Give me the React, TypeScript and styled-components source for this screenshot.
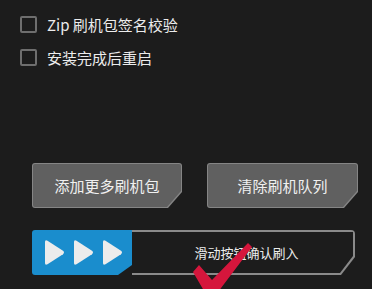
import React from "react";
import styled, { createGlobalStyle } from "styled-components";

const Global = createGlobalStyle`
  html, body { margin: 0; padding: 0; background: #1c1c1c; }
  body { width: 372px; height: 289px; overflow: hidden; font-family: "Noto Sans CJK SC", "Noto Sans", sans-serif; }
`;

const Page = styled.div`
  position: relative;
  width: 372px;
  height: 289px;
  background: #1c1c1c;
  display: flex;
  flex-direction: column;
  padding: 8px 0 0 20px;
  box-sizing: border-box;
  overflow: hidden;
`;

const OptionRow = styled.label`
  display: flex;
  align-items: center;
  gap: 10px;
  height: 33px;
  color: #ececec;
  font-size: 15px;
`;

const Box = styled.span`
  width: 17px;
  height: 17px;
  box-sizing: border-box;
  border: 2px solid #6e6e6e;
  border-radius: 2px;
`;

const Buttons = styled.div`
  display: flex;
  gap: 25px;
  margin: 89px 0 0 12px;
`;

const cut = (x: number, y: number) =>
  `polygon(0 0, 100% 0, 100% calc(100% - ${y}px), calc(100% - ${x}px) 100%, 0 100%)`;

const ButtonFrame = styled.div<{ $w: number }>`
  width: ${(p) => p.$w}px;
  height: 45px;
  padding: 1px;
  box-sizing: border-box;
  background: #858585;
  border-radius: 3px;
  clip-path: ${cut(14, 16)};
  display: flex;
`;

const ButtonFace = styled.div`
  flex: 1;
  background: #606060;
  border-radius: 2px;
  clip-path: ${cut(14, 16)};
  display: flex;
  align-items: center;
  justify-content: center;
  color: #f0f0f0;
  font-size: 15px;
  padding-bottom: 1px;
`;

const Slider = styled.div`
  display: flex;
  width: 323px;
  height: 45px;
  margin: 22px 0 0 12px;
`;

const Knob = styled.div`
  width: 100px;
  background: #1a8dcd;
  border-radius: 3px 0 0 3px;
  clip-path: ${cut(14, 10)};
  display: flex;
  align-items: center;
  gap: 7px;
  padding-left: 11px;
  box-sizing: border-box;
`;

const Arrow = styled.svg`
  width: 22px;
  height: 27px;
`;

const TrackFrame = styled.div`
  flex: 1;
  display: flex;
  padding: 2px 2px 2px 0;
  background: #8a8a8a;
  border-radius: 0 4px 0 0;
  clip-path: ${cut(14, 18)};
`;

const TrackFace = styled.div`
  flex: 1;
  background: #1c1c1c;
  clip-path: ${cut(13, 17)};
  display: flex;
  align-items: center;
  justify-content: center;
  padding-left: 8px;
  color: #ececec;
  font-size: 13px;
`;

const Check = styled.svg`
  position: absolute;
  left: 188px;
  top: 238px;
  width: 70px;
  height: 60px;
`;

const ArrowIcon = () => (
  <Arrow viewBox="0 0 22 27">
    <path d="M2 3 Q2 0.5 4.5 1.8 L20 11.8 Q22 13.5 20 15.2 L4.5 25.2 Q2 26.5 2 24 Z" fill="#ececec" />
  </Arrow>
);

export default function App() {
  return (
    <>
      <Global />
      <Page>
        <OptionRow>
          <Box />
          Zip 刷机包签名校验
        </OptionRow>
        <OptionRow>
          <Box />
          安装完成后重启
        </OptionRow>
        <Buttons>
          <ButtonFrame $w={150}>
            <ButtonFace>添加更多刷机包</ButtonFace>
          </ButtonFrame>
          <ButtonFrame $w={151}>
            <ButtonFace>清除刷机队列</ButtonFace>
          </ButtonFrame>
        </Buttons>
        <Slider>
          <Knob>
            <ArrowIcon />
            <ArrowIcon />
            <ArrowIcon />
          </Knob>
          <TrackFrame>
            <TrackFace>滑动按钮确认刷入</TrackFace>
          </TrackFrame>
        </Slider>
        <Check viewBox="188 238 70 60">
          <path d="M193 272 L199 265 L212 280 L248 243 L252 247 L215 296 L207 296 Z" fill="#d5163c" />
        </Check>
      </Page>
    </>
  );
}
